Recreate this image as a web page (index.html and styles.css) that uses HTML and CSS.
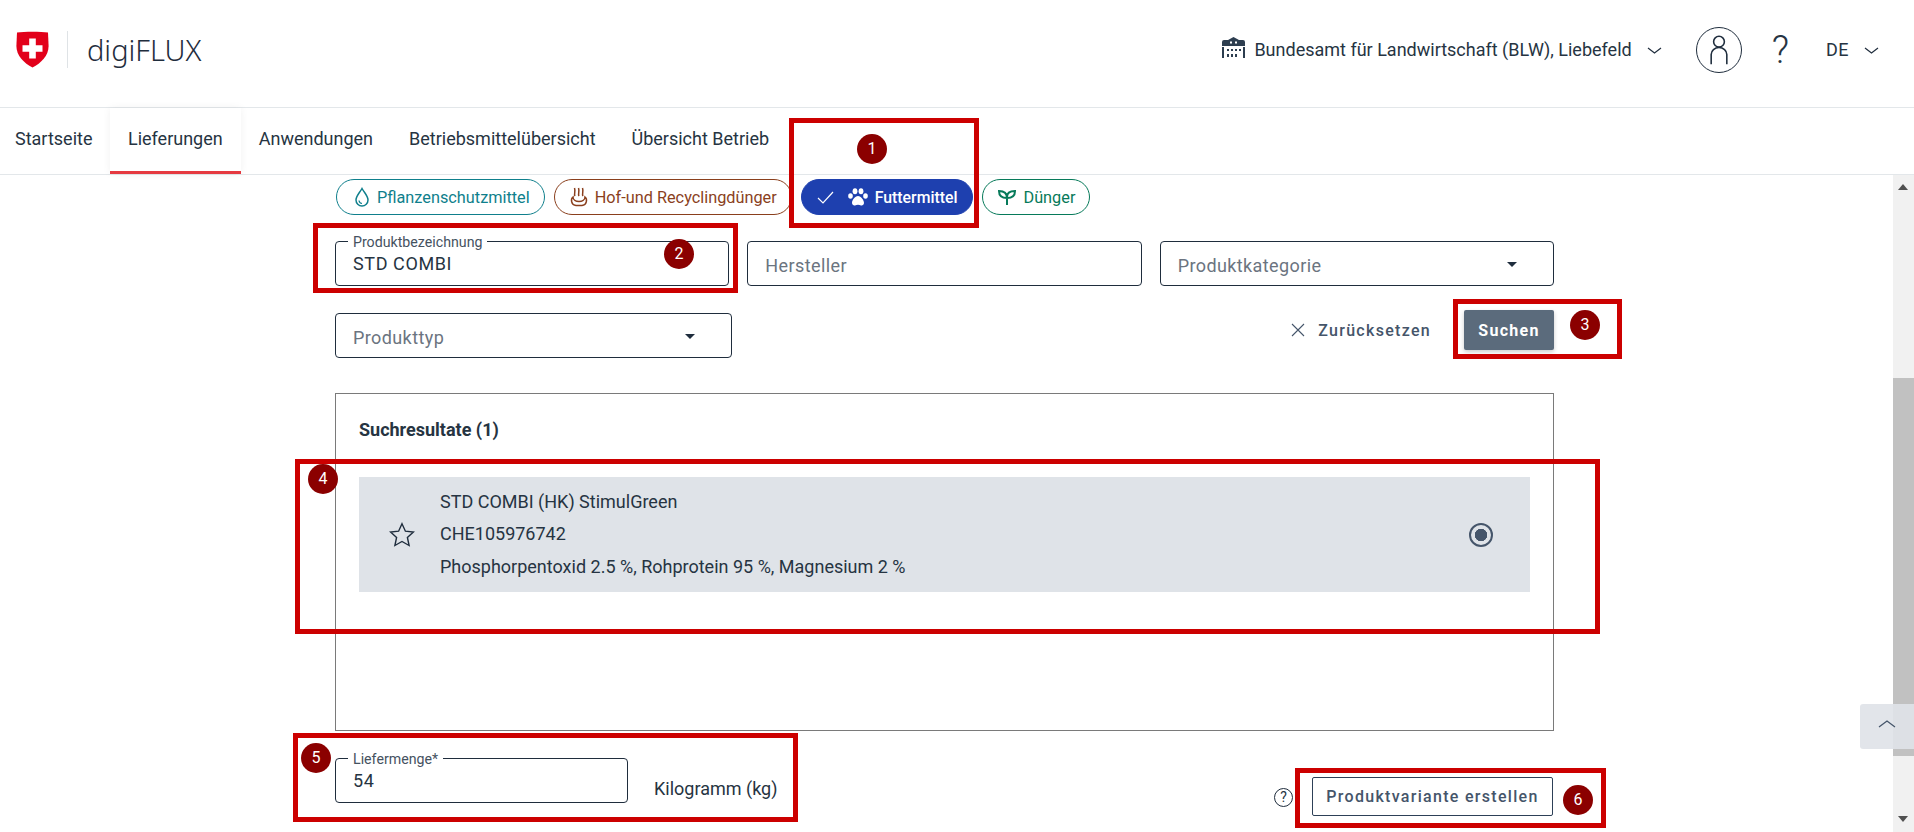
FILE: index.html
```html
<!DOCTYPE html>
<html lang="de">
<head>
    <meta charset="UTF-8">
    <title>digiFLUX</title>
    <link rel="stylesheet" href="styles.css">
</head>
<body>
    <header class="topbar">
        <svg class="shield" viewBox="0 0 33 37"><path d="M1 1.5 C8 0.5 25 0.5 32 1.5 L32.6 15 C32.6 25 25 32 16.5 36.5 C8 32 0.4 25 0.4 15 Z" fill="#e2001a"/><path d="M13.2 7.5h6.6v6.7h6.7v6.6h-6.7v6.7h-6.6v-6.7H6.5v-6.6h6.7z" fill="#fff"/></svg>
        <span class="divider"></span>
        <span class="brand">digiFLUX</span>
        <div class="topbar-right">
            <svg class="org-icon" viewBox="0 0 23 21"><path d="M11.5 0 17 3h4a2 2 0 0 1 2 2v4H0V5a2 2 0 0 1 2-2h4z" fill="#2d3e50"/><path d="M8 4.5h2v2H8zm5 0h2v2h-2z" fill="#fff"/><path d="M0 10h2v11H0zm21 0h2v11h-2z" fill="#2d3e50"/><path d="M5 12h2v2H5zm4 0h2v2H9zm4 0h2v2h-2zm4 0h2v2h-2zM5 17h2v3H5zm4 0h2v3H9zm4 0h2v3h-2z" fill="#2d3e50"/></svg>
            <span class="org-name">Bundesamt für Landwirtschaft (BLW), Liebefeld</span>
            <svg class="chev org-chev" viewBox="0 0 15 7"><path d="M1 1l6.5 5L14 1"/></svg>
            <span class="avatar">
                <svg viewBox="0 0 45 45"><circle cx="22.5" cy="14" r="5.5"/><path d="M14.5 37V27a8 7 0 0 1 16 0v10"/></svg>
            </span>
            <span class="help">?</span>
            <span class="lang">DE</span>
            <svg class="chev lang-chev" viewBox="0 0 15 7"><path d="M1 1l6.5 5L14 1"/></svg>
        </div>
    </header>

    <nav class="tabs">
        <a class="tab">Startseite</a>
        <a class="tab active">Lieferungen</a>
        <a class="tab">Anwendungen</a>
        <a class="tab">Betriebsmittelübersicht</a>
        <a class="tab">Übersicht Betrieb</a>
    </nav>

    <div class="pane">
        <main class="content">
            <div class="chips">
                <span class="chip chip-teal">
                    <svg viewBox="0 0 16 20"><path d="M8 1.5C5.5 6 2 9 2 13a6 6 0 0 0 12 0c0-4-3.5-7-6-11.5z" fill="none" stroke="currentColor" stroke-width="1.5"/><path d="M5 13.5a3.5 3.5 0 0 0 3 3" fill="none" stroke="currentColor" stroke-width="1.2"/></svg>
                    Pflanzenschutzmittel
                </span>
                <span class="chip chip-brown">
                    <svg viewBox="0 0 18 20"><path d="M5 9C3.5 6.5 6 5.5 4.5 1M9 9C7.5 6.5 10 5.5 8.5 1M13 9c-1.5-2.5 1-3.5-.5-8" fill="none" stroke="currentColor" stroke-width="1.5"/><path d="M3 10c-2.5 2-2 8 3 8.5h6c5-.5 5.5-6.5 3-8.5 0 3-3 4.5-6 4.5S3 13 3 10z" fill="none" stroke="currentColor" stroke-width="1.5"/></svg>
                    Hof-und Recyclingdünger
                </span>
                <span class="chip chip-blue">
                    <svg class="check" viewBox="0 0 17 13"><path d="M1 7l5 5L16 1" fill="none" stroke="#fff" stroke-width="1.2"/></svg>
                    <svg class="paw" viewBox="0 0 20 18"><ellipse cx="2.5" cy="8" rx="2.3" ry="2.7" fill="#fff"/><ellipse cx="7" cy="3.2" rx="2.4" ry="3" fill="#fff"/><ellipse cx="13" cy="3.2" rx="2.4" ry="3" fill="#fff"/><ellipse cx="17.5" cy="8" rx="2.3" ry="2.7" fill="#fff"/><path d="M10 8c-3 0-6 4-6 7 0 2 2 2.5 3 2.5s2-.7 3-.7 2 .7 3 .7 3-.5 3-2.5c0-3-3-7-6-7z" fill="#fff"/></svg>
                    Futtermittel
                </span>
                <span class="chip chip-green">
                    <svg viewBox="0 0 18 18"><path d="M9 17V9M9 10C9 5 6 3 1 3c0 5 3 7 8 7zM9 9c0-4 3-6 8-6 0 5-3 7-8 7" fill="none" stroke="currentColor" stroke-width="2"/></svg>
                    Dünger
                </span>
            </div>

            <div class="filter-row">
                <div class="field">
                    <label class="field-label">Produktbezeichnung</label>
                    <span class="field-value">STD COMBI</span>
                </div>
                <div class="field">
                    <span class="field-placeholder">Hersteller</span>
                </div>
                <div class="field">
                    <span class="field-placeholder">Produktkategorie</span>
                    <span class="caret"></span>
                </div>
            </div>

            <div class="filter-row second">
                <div class="field wide">
                    <span class="field-placeholder">Produkttyp</span>
                    <span class="caret"></span>
                </div>
                <div class="actions">
                    <svg class="reset-x" viewBox="0 0 14 14"><path d="M1 1l12 12M13 1L1 13"/></svg>
                    <span class="reset">Zurücksetzen</span>
                    <button class="btn-search">Suchen</button>
                </div>
            </div>

            <section class="results">
                <h2 class="results-title">Suchresultate (1)</h2>
                <div class="result-row">
                    <svg class="star" viewBox="0 0 26 26"><path d="M13 1.8l3.4 7.4 8 .9-6 5.4 1.7 8L13 19.5 5.9 23.5l1.7-8-6-5.4 8-.9z"/></svg>
                    <div class="result-text">
                        <p>STD COMBI (HK) StimulGreen</p>
                        <p>CHE105976742</p>
                        <p>Phosphorpentoxid 2.5 %, Rohprotein 95 %, Magnesium 2 %</p>
                    </div>
                    <span class="radio"></span>
                </div>
            </section>

            <div class="bottom-row">
                <div class="field amount">
                    <label class="field-label">Liefermenge*</label>
                    <span class="field-value">54</span>
                </div>
                <span class="unit">Kilogramm (kg)</span>
                <span class="hint">?</span>
                <button class="btn-variant">Produktvariante erstellen</button>
            </div>
        </main>

        <div class="scrollbar">
            <span class="arrow up"></span>
            <span class="thumb"></span>
            <span class="arrow down"></span>
        </div>
    </div>

    <button class="to-top"><svg viewBox="0 0 18 8"><path d="M1 7l8-6 8 6"/></svg></button>

    <!-- annotations on top of the screenshot -->
    <span class="mark mark1"></span>
    <span class="mark mark2"></span>
    <span class="mark mark3"></span>
    <span class="mark mark4"></span>
    <span class="mark mark5"></span>
    <span class="mark mark6"></span>
    <span class="badge badge1">1</span>
    <span class="badge badge2">2</span>
    <span class="badge badge3">3</span>
    <span class="badge badge4">4</span>
    <span class="badge badge5">5</span>
    <span class="badge badge6">6</span>
</body>
</html>
```

FILE: styles.css
```css
/* page */
* {
    box-sizing: border-box;
}
body {
    margin: 0;
    height: 832px;
    overflow: hidden;
    position: relative;
    display: flex;
    flex-direction: column;
    font-family: Roboto, "Liberation Sans", sans-serif;
    font-size: 18px;
    color: #263442;
    background-color: #fff;
}

/* top bar */
.topbar {
    height: 108px;
    flex: none;
    display: flex;
    align-items: center;
    padding: 0 35px 8px 16px;
    border-bottom: 1px solid #e3e7ea;
}
.shield {
    width: 33px;
    height: 37px;
}
.divider {
    width: 1px;
    height: 37px;
    margin-left: 18px;
    background-color: #dfe3e6;
}
.brand {
    margin-left: 19px;
    font-family: "Noto Sans", sans-serif;
    font-weight: 300;
    font-size: 29px;
    color: #1f2d3d;
}
.topbar-right {
    margin-left: auto;
    display: flex;
    align-items: center;
}
.org-icon {
    width: 23px;
    height: 21px;
    margin-top: -4px;
}
.org-name {
    margin-left: 9px;
}
.chev {
    width: 15px;
    height: 7px;
    fill: none;
    stroke: #1f2d3d;
    stroke-width: 1.2;
}
.org-chev {
    margin-left: 15px;
    margin-top: 2px;
}
.avatar {
    width: 46px;
    height: 46px;
    margin-left: 34px;
    border: 1px solid #1f2d3d;
    border-radius: 50%;
}
.avatar svg {
    display: block;
    width: 44px;
    height: 44px;
    fill: none;
    stroke: #1f2d3d;
    stroke-width: 1.6;
}
.help {
    margin-left: 30px;
    font-weight: 300;
    font-size: 38px;
    line-height: 46px;
}
.lang {
    margin-left: 37px;
    letter-spacing: 0.5px;
}
.lang-chev {
    margin-left: 15px;
    margin-top: 2px;
}

/* tabs */
.tabs {
    height: 67px;
    flex: none;
    display: flex;
    border-bottom: 1px solid #e3e7ea;
}
.tab {
    display: flex;
    align-items: center;
    padding: 0 18px 5px;
}
.tab:first-child {
    padding: 0 17.5px 5px 15px;
}
.tab.active {
    border-bottom: 3px solid #e53940;
    padding-bottom: 2px;
    box-shadow: 0 0 8px rgba(0, 0, 0, 0.06);
}

/* scroll pane */
.pane {
    flex: 1;
    display: flex;
    min-height: 0;
}
.content {
    flex: 1;
    padding: 4px 339px 0 335px;
    min-width: 0;
}
.scrollbar {
    width: 21px;
    flex: none;
    position: relative;
    background-color: #f1f1f1;
}
.thumb {
    position: absolute;
    left: 0;
    right: 0;
    top: 203px;
    height: 378px;
    background-color: #c1c1c1;
}
.arrow {
    position: absolute;
    left: 5px;
    border-left: 5.5px solid transparent;
    border-right: 5.5px solid transparent;
}
.arrow.up {
    top: 9px;
    border-bottom: 6px solid #505050;
}
.arrow.down {
    bottom: 10px;
    border-top: 6px solid #505050;
}
.to-top {
    position: absolute;
    right: 0;
    top: 704px;
    width: 54px;
    height: 45px;
    padding: 0 0 6px;
    border: none;
    border-radius: 3px 0 0 3px;
    background-color: rgba(223, 227, 232, 0.92);
}
.to-top svg {
    width: 18px;
    height: 8px;
    fill: none;
    stroke: #45556a;
    stroke-width: 1.3;
}

/* type chips */
.chips {
    display: flex;
    gap: 9px;
    padding-left: 1px;
}
.chip {
    height: 36px;
    display: flex;
    align-items: center;
    gap: 7px;
    padding: 0 14px 0 17px;
    border: 1px solid currentColor;
    border-radius: 18px;
    font-size: 16.3px;
}
.chip svg {
    width: 17px;
    height: 20px;
    flex: none;
}
.chip-teal {
    color: #0f7f8c;
}
.chip-teal svg {
    width: 16px;
}
.chip-brown {
    color: #8a3f1d;
    padding-left: 15px;
}
.chip-brown svg {
    width: 18px;
}
.chip-blue {
    color: #fff;
    background-color: #1e40af;
    border-color: #1e40af;
    font-weight: 500;
    font-size: 15.8px;
    padding-right: 15px;
    padding-left: 15px;
}
.chip svg.check {
    width: 17px;
    height: 13px;
    margin-right: 7px;
}
.chip svg.paw {
    width: 20px;
    height: 18px;
}
.chip-green {
    color: #077a5a;
    padding-left: 15px;
}
.chip-green svg {
    width: 18px;
    height: 18px;
}

/* filter form */
.filter-row {
    display: flex;
    gap: 18px;
    margin-top: 26px;
}
.filter-row.second {
    justify-content: space-between;
    margin-top: 27px;
}
.field {
    position: relative;
    flex: 1;
    height: 45px;
    display: flex;
    align-items: center;
    justify-content: space-between;
    padding: 1px 17px 0;
    border: 1px solid #1f2d3d;
    border-radius: 4px;
}
.field.wide {
    flex: none;
    width: 397px;
}
.field-label {
    position: absolute;
    left: 12px;
    top: -7px;
    padding: 0 5px;
    background-color: #fff;
    font-size: 14.2px;
    line-height: 15px;
    color: #45525f;
}
.field-value {
    padding-bottom: 2px;
    letter-spacing: 0.6px;
}
.field-placeholder {
    padding-top: 2px;
    color: #6b7480;
    letter-spacing: 0.4px;
}
.caret {
    margin-right: 19px;
    border-left: 5px solid transparent;
    border-right: 5px solid transparent;
    border-top: 5px solid #1f2d3d;
}
.actions {
    display: flex;
    align-items: center;
    height: 40px;
    margin-top: -3px;
}
.reset-x {
    width: 14px;
    height: 14px;
    fill: none;
    stroke: #45556a;
    stroke-width: 1.1;
}
.reset {
    margin-left: 13px;
    font-size: 16px;
    font-weight: 500;
    letter-spacing: 1.3px;
    color: #45556a;
}
.btn-search {
    width: 90px;
    height: 40px;
    margin-left: 33px;
    border: none;
    border-radius: 2px;
    background-color: #5b6b7c;
    color: #fff;
    font-family: inherit;
    font-size: 16px;
    font-weight: 700;
    letter-spacing: 1.3px;
    box-shadow: 0 2px 4px rgba(0, 0, 0, 0.2);
}

/* results */
.results {
    height: 338px;
    margin-top: 35px;
    padding: 0 23px;
    border: 1px solid #7a7a7a;
}
.results-title {
    margin: 26px 0 0;
    font-size: 18px;
    line-height: 20px;
    font-weight: 700;
}
.result-row {
    height: 115px;
    margin-top: 37px;
    display: flex;
    align-items: center;
    padding: 0 37px 0 30px;
    background-color: #dfe3e8;
}
.star {
    width: 26px;
    height: 26px;
    flex: none;
    fill: none;
    stroke: #1f2d3d;
    stroke-width: 1.4;
}
.result-text {
    flex: 1;
    margin-left: 25px;
}
.result-text p {
    margin: 0;
    line-height: 32.5px;
}
.radio {
    width: 24px;
    height: 24px;
    flex: none;
    border: 2px solid #45556a;
    border-radius: 50%;
    background: radial-gradient(circle, #45556a 0 6px, transparent 6.5px);
}

/* bottom */
.bottom-row {
    display: flex;
    align-items: flex-start;
    margin-top: 27px;
}
.field.amount {
    flex: none;
    width: 293px;
}
.unit {
    margin: 19px 0 0 26px;
    line-height: 24px;
}
.hint {
    width: 19px;
    height: 19px;
    margin: 30px 0 0 auto;
    border: 1px solid #1f2d3d;
    border-radius: 50%;
    font-size: 14px;
    line-height: 17px;
    text-align: center;
}
.btn-variant {
    width: 241px;
    height: 39px;
    margin: 19px 1px 0 19px;
    border: 1px solid #2d4057;
    border-radius: 2px;
    background-color: #fff;
    color: #45556a;
    font-family: inherit;
    font-size: 16px;
    font-weight: 500;
    letter-spacing: 1.3px;
}

/* red annotation boxes and number badges */
.mark {
    position: absolute;
    border: 5px solid #cc0000;
}
.mark1 { left: 789px; top: 118px; width: 190px; height: 110px; }
.mark2 { left: 313px; top: 223px; width: 425px; height: 70px; }
.mark3 { left: 1453px; top: 299px; width: 169px; height: 60px; }
.mark4 { left: 295px; top: 459px; width: 1305px; height: 175px; }
.mark5 { left: 293px; top: 733px; width: 505px; height: 89px; }
.mark6 { left: 1295px; top: 768px; width: 311px; height: 60px; }
.badge {
    position: absolute;
    width: 30px;
    height: 30px;
    border-radius: 50%;
    background-color: #8b0000;
    color: #fff;
    font-size: 16px;
    line-height: 30px;
    text-align: center;
}
.badge1 { left: 857px; top: 134px; }
.badge2 { left: 664px; top: 239px; }
.badge3 { left: 1570px; top: 310px; }
.badge4 { left: 308px; top: 464px; }
.badge5 { left: 301px; top: 743px; }
.badge6 { left: 1563px; top: 785px; }
```
